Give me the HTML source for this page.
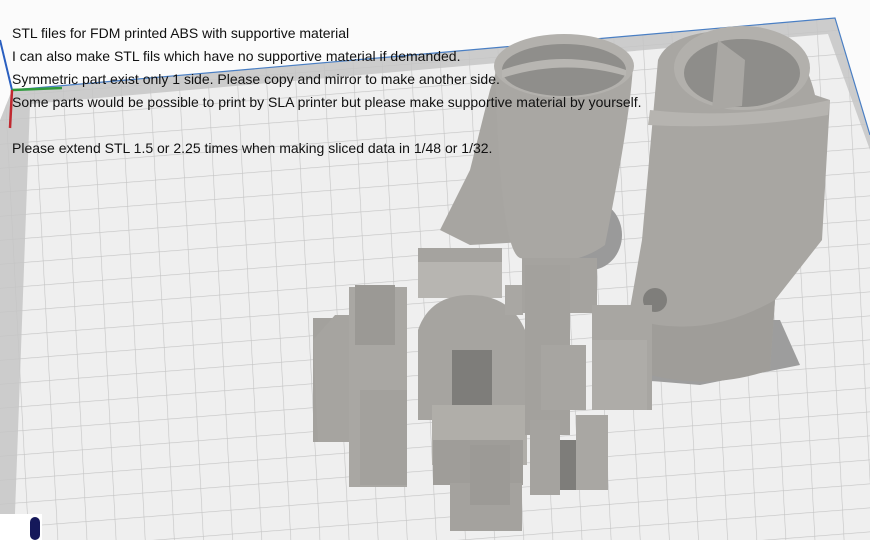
<!DOCTYPE html>
<html><head><meta charset="utf-8"><style>
html,body{margin:0;padding:0;width:870px;height:540px;overflow:hidden;background:#fafafa}
svg{position:absolute;left:0;top:0}
.t{position:absolute;left:12px;font-family:"Liberation Sans",sans-serif;font-size:14px;color:#111;white-space:nowrap;letter-spacing:0px}
</style></head><body>
<svg width="870" height="540" viewBox="0 0 870 540">
<defs>
<pattern id="g" width="29" height="24" patternUnits="userSpaceOnUse" patternTransform="skewY(-4.5) skewX(3)">
<rect width="29" height="24" fill="#efefef"/>
<path d="M0 0H29M0 0V24" stroke="#c4c4c4" stroke-width="1.2"/>
</pattern>
<clipPath id="pc"><polygon points="12,90 835,18 870,135 870,540 0,540 0,120"/></clipPath>
</defs>
<rect width="870" height="540" fill="#fbfbfb"/>
<g clip-path="url(#pc)">
<rect width="870" height="540" fill="url(#g)"/>
<polygon points="12,90 835,18 870,135 870,150 828,34 30,104 14,540 0,540 0,120" fill="#c6c6c6" opacity="0.85"/>
</g>
<polyline points="12,90 835,18 870,135" fill="none" stroke="#4a7fc4" stroke-width="1.2"/>
<line x1="12" y1="90" x2="0" y2="40" stroke="#2a5fc0" stroke-width="2"/>
<line x1="12" y1="90" x2="62" y2="88" stroke="#2f9a3c" stroke-width="2.5"/>
<line x1="12" y1="90" x2="10" y2="128" stroke="#c0282f" stroke-width="2.5"/>
<polygon points="640,320 780,320 800,365 700,385 640,380" fill="#9d9d9d"/>
<ellipse cx="590" cy="235" rx="32" ry="35" fill="#9a9a9a"/>
<polygon points="440,230 470,170 490,90 500,60 560,240 470,245" fill="#a7a5a1"/>
<path d="M495,65 Q500,250 520,258 Q570,270 605,245 Q630,120 633,65 Z" fill="#a9a7a3"/>
<ellipse cx="564" cy="66" rx="70" ry="32" fill="#b3b1ad"/>
<ellipse cx="564" cy="70" rx="62" ry="26" fill="#8f8e8b"/>
<path d="M502,70 Q564,48 626,70 L626,76 Q564,58 502,78Z" fill="#b8b6b2"/>
<path d="M658,60 L642,240 L628,320 L640,370 Q700,390 770,370 L775,300 L822,240 L830,100 L815,95 Q800,30 740,30 Q670,30 658,60Z" fill="#a8a6a2"/>
<ellipse cx="742" cy="68" rx="68" ry="42" fill="#b2b0ac"/>
<ellipse cx="742" cy="73" rx="58" ry="34" fill="#8e8d8a"/>
<polygon points="718,40 745,60 742,106 712,110" fill="#a9a7a3"/>
<path d="M650,110 Q740,120 830,100 L828,115 Q740,130 648,125Z" fill="#b6b4b0"/>
<path d="M635,320 Q705,340 775,300 L770,370 Q705,392 640,372Z" fill="#9f9d99"/>
<circle cx="655" cy="300" r="12" fill="#7f7e7b"/>
<rect x="418" y="248" width="84" height="50" fill="#b7b5b1"/>
<rect x="418" y="248" width="84" height="14" fill="#a5a39f"/>
<path d="M418,330 Q430,295 470,295 Q510,295 525,330 L525,420 L418,420Z" fill="#a6a4a0"/>
<rect x="452" y="350" width="40" height="55" fill="#7e7d7a"/>
<rect x="432" y="405" width="95" height="60" fill="#b0aea9"/>
<rect x="433" y="440" width="90" height="45" fill="#9f9d99"/>
<rect x="450" y="483" width="72" height="48" fill="#a4a29e"/>
<rect x="470" y="445" width="40" height="60" fill="#9c9a96"/>
<rect x="313" y="318" width="40" height="124" fill="#a3a19d"/>
<polygon points="313,340 335,315 353,315 353,442 318,442" fill="#a6a4a0"/>
<rect x="349" y="287" width="58" height="200" fill="#a9a7a3"/>
<rect x="355" y="285" width="40" height="60" fill="#9b9995"/>
<rect x="360" y="390" width="47" height="95" fill="#a3a19d"/>
<rect x="505" y="285" width="18" height="30" fill="#a9a7a3"/>
<rect x="522" y="258" width="75" height="55" fill="#a5a39f"/>
<rect x="525" y="265" width="45" height="170" fill="#a3a19d"/>
<rect x="541" y="345" width="45" height="65" fill="#a7a5a1"/>
<rect x="530" y="420" width="30" height="75" fill="#a5a39f"/>
<rect x="560" y="440" width="18" height="50" fill="#7e7d7a"/>
<rect x="576" y="415" width="32" height="75" fill="#a9a7a3"/>
<rect x="592" y="305" width="60" height="105" fill="#a8a6a2"/>
<rect x="592" y="340" width="55" height="70" fill="#aeaca8"/>
<rect x="0" y="514" width="42" height="26" fill="#fff"/>
<rect x="30" y="517" width="10" height="23" rx="5" fill="#15185a"/>
</svg>
<div class="t" style="top:25px">STL files for FDM printed ABS with supportive material</div>
<div class="t" style="top:48px">I can also make STL fils which have no supportive material if demanded.</div>
<div class="t" style="top:71px">Symmetric part exist only 1 side. Please copy and mirror to make another side.</div>
<div class="t" style="top:94px">Some parts would be possible to print by SLA printer but please make supportive material by yourself.</div>
<div class="t" style="top:140px">Please extend STL 1.5 or 2.25 times when making sliced data in 1/48 or 1/32.</div>
</body></html>
